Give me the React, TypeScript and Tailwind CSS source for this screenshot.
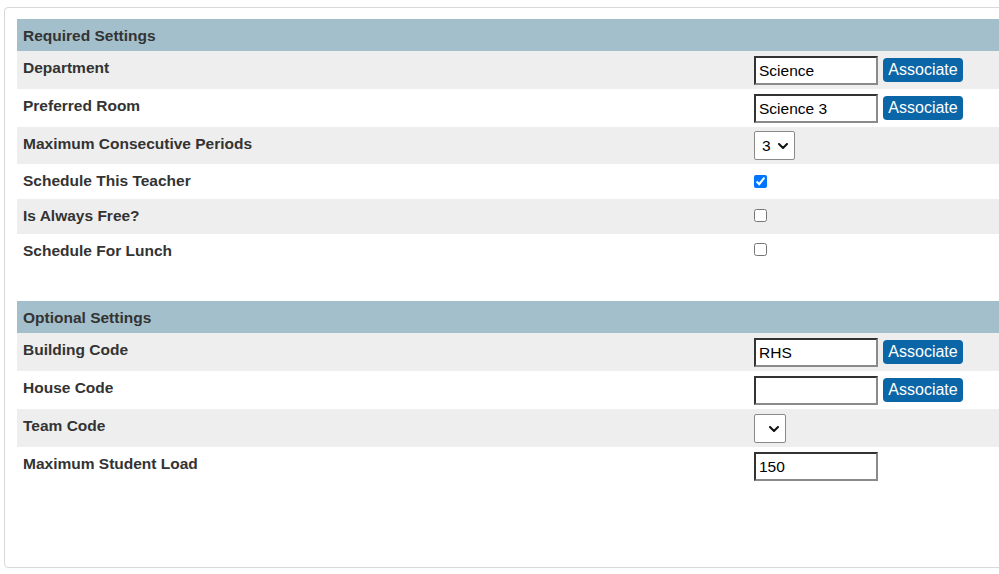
import React from "react";

const font = { fontFamily: '"Liberation Sans", Arial, sans-serif' };

function Chevron() {
  return (
    <svg width="10" height="6" viewBox="0 0 10 6" className="pointer-events-none absolute right-[7px] top-[12px]">
      <path d="M1 1 L5 5 L9 1" fill="none" stroke="#111" strokeWidth="2" strokeLinecap="round" strokeLinejoin="round" />
    </svg>
  );
}

function Header({ title }: { title: string }) {
  return (
    <div className="h-[32px] bg-[#a4bfcc] pl-[6px] pt-[1px] flex items-center font-bold text-[15.5px] text-[#333]">
      {title}
    </div>
  );
}

function Row({
  label,
  shade,
  h,
  children,
  vpad,
}: {
  label: string;
  shade: boolean;
  h: string;
  children?: React.ReactNode;
  vpad: string;
}) {
  return (
    <div className={`grid grid-cols-[737px_1fr] ${h} ${shade ? "bg-[#eeeeee]" : "bg-white"}`}>
      <div className="pl-[6px] pt-[8px] leading-[18px] font-bold text-[15.5px] text-[#333]">{label}</div>
      <div className={`${vpad} flex items-start gap-[5px]`}>{children}</div>
    </div>
  );
}

function TextBox({ value }: { value: string }) {
  return (
    <input
      type="text"
      defaultValue={value}
      className="w-[124px] h-[29px] bg-white border-2 border-t-[#333] border-l-[#333] border-b-[#8a8a8a] border-r-[#8a8a8a] pl-[3px] text-[15.5px] text-black outline-none"
    />
  );
}

function AssocButton() {
  return (
    <button className="mt-[2px] h-[24px] w-[80px] rounded-[4px] bg-[#0b66a8] text-white text-[16px] leading-[24px]">
      Associate
    </button>
  );
}

function Select({ width, value, options }: { width: string; value: string; options: string[] }) {
  return (
    <div className="relative">
      <select
        defaultValue={value}
        className={`${width} h-[29px] appearance-none bg-white border border-[#8a8a8a] rounded-[2px] pl-[7px] text-[15.5px] text-black outline-none`}
      >
        {options.map((o) => (
          <option key={o} value={o}>
            {o}
          </option>
        ))}
      </select>
      <Chevron />
    </div>
  );
}

function Check({ checked }: { checked?: boolean }) {
  return <input type="checkbox" defaultChecked={checked} className="w-[13px] h-[13px] m-0" />;
}

export default function App() {
  return (
    <div className="w-[999px] h-[574px] overflow-hidden bg-white pl-[4px] pt-[7px]" style={font}>
      <div className="w-[1030px] h-[561px] border border-[#d8d8d8] rounded-[4px] pl-[12px] pt-[11px]">
        <Header title="Required Settings" />
        <Row label="Department" shade h="h-[38px]" vpad="pt-[5px]">
          <TextBox value="Science" />
          <AssocButton />
        </Row>
        <Row label="Preferred Room" shade={false} h="h-[38px]" vpad="pt-[5px]">
          <TextBox value="Science 3" />
          <AssocButton />
        </Row>
        <Row label="Maximum Consecutive Periods" shade h="h-[37px]" vpad="pt-[4px]">
          <Select width="w-[41px]" value="3" options={["1", "2", "3", "4", "5", "6"]} />
        </Row>
        <Row label="Schedule This Teacher" shade={false} h="h-[35px]" vpad="pt-[11px]">
          <Check checked />
        </Row>
        <Row label="Is Always Free?" shade h="h-[35px]" vpad="pt-[10px]">
          <Check />
        </Row>
        <Row label="Schedule For Lunch" shade={false} h="h-[35px]" vpad="pt-[9px]">
          <Check />
        </Row>
        <div className="h-[32px]" />
        <Header title="Optional Settings" />
        <Row label="Building Code" shade h="h-[38px]" vpad="pt-[5px]">
          <TextBox value="RHS" />
          <AssocButton />
        </Row>
        <Row label="House Code" shade={false} h="h-[38px]" vpad="pt-[5px]">
          <TextBox value="" />
          <AssocButton />
        </Row>
        <Row label="Team Code" shade h="h-[38px]" vpad="pt-[5px]">
          <Select width="w-[32px]" value="" options={["", "A", "B", "C"]} />
        </Row>
        <Row label="Maximum Student Load" shade={false} h="h-[38px]" vpad="pt-[5px]">
          <TextBox value="150" />
        </Row>
      </div>
    </div>
  );
}
